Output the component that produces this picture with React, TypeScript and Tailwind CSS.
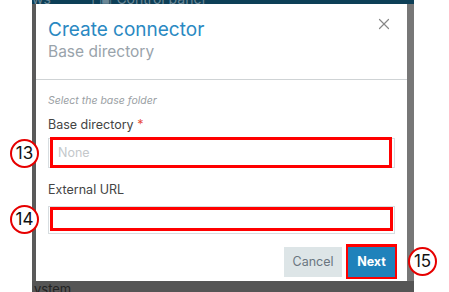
import { X } from "lucide-react";

function Marker({ n, className }: { n: string; className: string }) {
  return (
    <div
      className={`absolute w-[29px] h-[29px] rounded-full border-2 border-[#e60000] bg-white flex items-center justify-center text-[17px] text-[#111] ${className}`}
    >
      {n}
    </div>
  );
}

export default function App() {
  return (
    <div className="relative w-[449px] h-[292px] bg-white overflow-hidden font-['Inter','Liberation_Sans',sans-serif]">
      <div className="absolute left-[32px] top-0 w-[382px] h-[292px] bg-[#5c5c5c] flex flex-col">
        {/* app header behind the dialog */}
        <div className="h-[4px] bg-[#0d3f57] overflow-hidden shrink-0">
          <div className="-mt-[12px] flex gap-[40px] text-[14px] text-[#6b8796] whitespace-nowrap">
            <span>ws</span>
            <span>| ▣ Control panel</span>
          </div>
        </div>
        <div className="flex flex-1">
          <div className="w-[4px] bg-[#5a5a5a]" />
          {/* dialog */}
          <div className="w-[371px] h-[277px] bg-white flex flex-col">
            <div className="relative px-[12px] pt-[14px] h-[76px] border-b border-[#cfd3d5]">
              <div className="text-[19px] leading-[24px] text-[#2a89c2]">Create connector</div>
              <div className="text-[15.5px] leading-[20px] text-[#99a3ab]">Base directory</div>
              <X className="absolute right-[14px] top-[11px] text-[#888]" size={18} strokeWidth={1.6} />
            </div>
            <div className="px-[12px] pt-[14px]">
              <div className="text-[10.5px] italic text-[#9aa0a4] leading-[14px]">Select the base folder</div>
              <div className="mt-[9px] text-[12.5px] text-[#444] leading-[16px]">
                Base directory <span className="text-[#e74c3c]">*</span>
              </div>
              <div className="mt-[5px] h-[30px] border border-[#d7dde0] relative flex items-center">
                <div className="absolute left-[1px] right-[2px] top-[-2px] bottom-[-1px] border-[3px] border-[#ff0000]" />
                <span className="pl-[9px] text-[12.5px] text-[#c4c8cb]">None</span>
              </div>
              <div className="mt-[14px] text-[12.5px] text-[#444] leading-[16px]">External URL</div>
              <div className="mt-[8px] h-[28px] border border-[#d7dde0] relative">
                <div className="absolute left-[1px] right-[1px] top-[0px] bottom-[2px] border-[3px] border-[#ff0000]" />
              </div>
              <div className="mt-[13px] flex justify-end gap-[6px]">
                <button className="w-[58px] h-[30px] bg-[#dde5e7] text-[12.5px] text-[#6a7680]">Cancel</button>
                <div className="relative">
                  <div className="absolute -left-[2px] -right-[2px] -top-[3px] -bottom-[2px] border-[3px] border-[#ff0000]" />
                  <button className="relative w-[47px] h-[30px] bg-[#1f82bb] text-[12.5px] font-bold text-white">Next</button>
                </div>
              </div>
            </div>
          </div>
          <div className="w-[7px] bg-[#777]" />
        </div>
        <div className="h-[11px] bg-[#555] overflow-hidden text-[13px] leading-[16px] text-[#222] pl-[2px]">
          ystem
        </div>
      </div>
      <Marker n="13" className="left-[10px] top-[139px]" />
      <Marker n="14" className="left-[10px] top-[205px]" />
      <Marker n="15" className="left-[408px] top-[247px]" />
    </div>
  );
}
